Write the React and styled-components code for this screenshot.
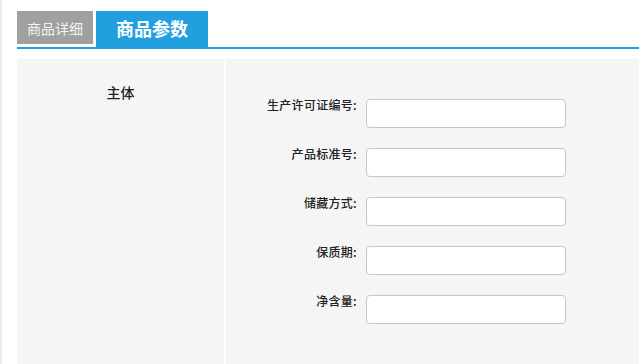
import React from 'react'
import styled, { createGlobalStyle } from 'styled-components'

const GlobalStyle = createGlobalStyle`
    html, body {
        margin: 0;
        padding: 0;
        background: #fff;
    }
    body {
        font-family: "Noto Sans CJK SC", "Noto Sans", sans-serif;
        color: #333;
    }
`

const Page = styled.div`
    min-height: 364px;
    box-sizing: border-box;
    border-left: 2px solid #ececec;
    padding: 11px 0 0 15px;
    overflow: hidden;
`

const TabBar = styled.div`
    display: flex;
    align-items: flex-end;
    gap: 3px;
    border-bottom: 2px solid #229fdf;
`

const Tab = styled.div`
    display: flex;
    align-items: center;
    justify-content: center;
    box-sizing: border-box;
    width: ${props => props.active ? '112px' : '76px'};
    height: ${props => props.active ? '36px' : '33px'};
    margin-bottom: ${props => props.active ? '0' : '3px'};
    padding-bottom: ${props => props.active ? '3px' : '0'};
    background: ${props => props.active ? '#229fdf' : '#a0a0a0'};
    color: ${props => props.active ? '#fff' : '#f4f4f4'};
    font-size: ${props => props.active ? '18px' : '14px'};
    font-weight: ${props => props.active ? 'bold' : 'normal'};
`

const Panel = styled.div`
    display: grid;
    grid-template-columns: 207px 1fr;
    gap: 2px;
    margin-top: 10px;
    height: 305px;
`

const SideCol = styled.div`
    background: #f5f5f5;
    text-align: center;
    padding-top: 23px;
    font-size: 14px;
    font-weight: 500;
    color: #222;
`

const FieldCol = styled.div`
    background: #f5f5f5;
    display: flex;
    flex-direction: column;
    gap: 20px;
    padding-top: 40px;
`

const Row = styled.div`
    display: flex;
    align-items: flex-start;
    gap: 9px;
`

const Label = styled.label`
    width: 131px;
    text-align: right;
    font-size: 12px;
    line-height: 12px;
    letter-spacing: 0.3px;
    font-weight: 500;
    color: #222;
`

const Input = styled.input`
    width: 200px;
    height: 29px;
    box-sizing: border-box;
    border: 1px solid #c6c6c6;
    border-radius: 4px;
    background: #fff;
    outline: none;
`

const fields = ['生产许可证编号:', '产品标准号:', '储藏方式:', '保质期:', '净含量:']

export default function App() {
    return (
        <Page>
            <GlobalStyle />
            <TabBar>
                <Tab>商品详细</Tab>
                <Tab active>商品参数</Tab>
            </TabBar>
            <Panel>
                <SideCol>主体</SideCol>
                <FieldCol>
                    {fields.map(f => (
                        <Row key={f}>
                            <Label>{f}</Label>
                            <Input type="text" />
                        </Row>
                    ))}
                </FieldCol>
            </Panel>
        </Page>
    )
}
